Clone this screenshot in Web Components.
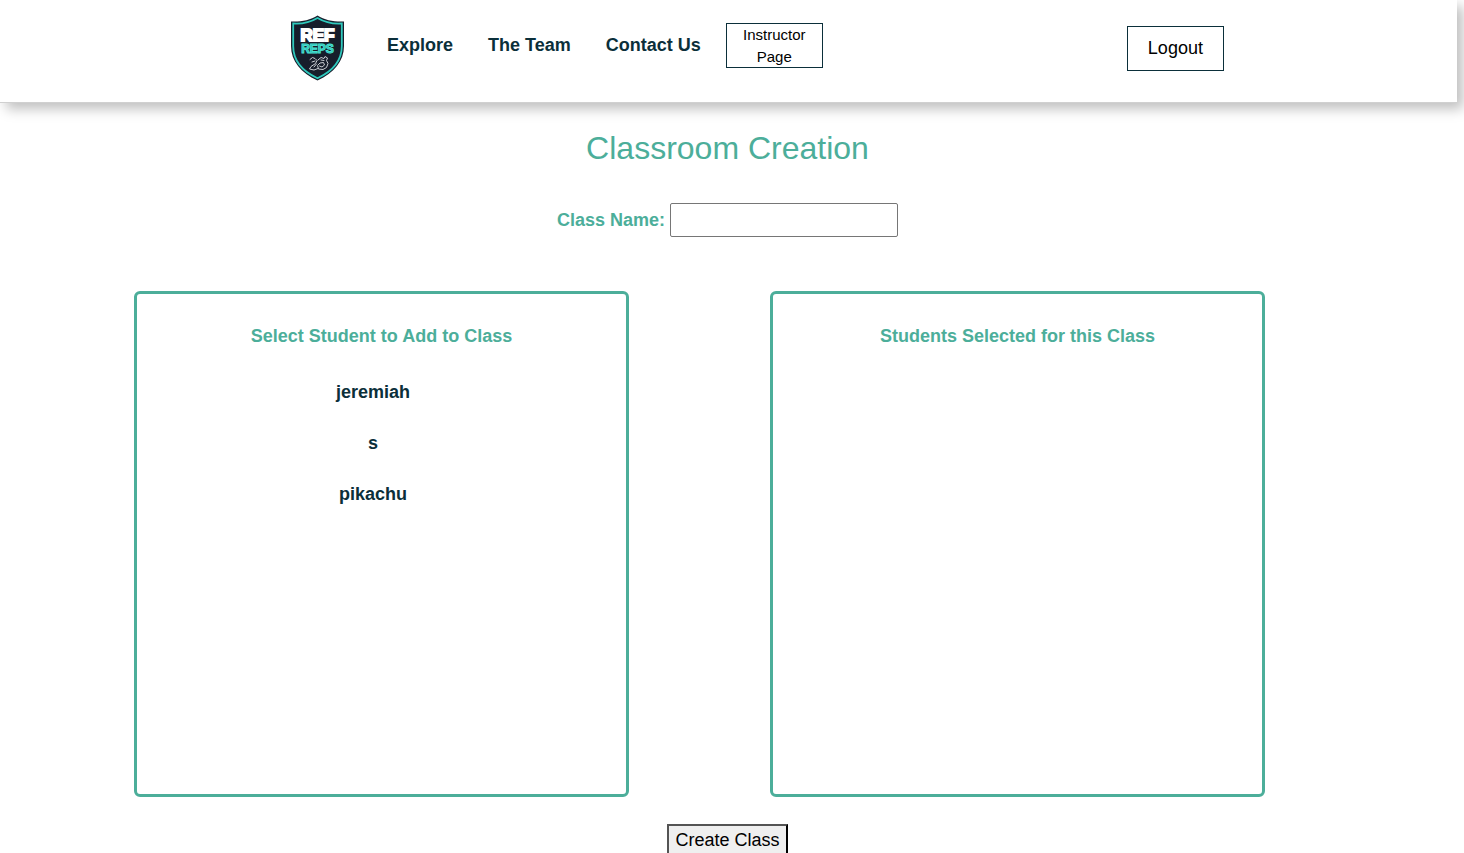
<!DOCTYPE html>
<html lang="en">
<head>
<meta charset="utf-8">
<meta name="viewport" content="width=device-width, initial-scale=1">
<title>Classroom Creation</title>
<style>
  html { --teal: #4cae9a; --ink: #0b2f3a; background: #fff; }
  body { margin: 0; padding-right: 7px; font: 18px/22px "Liberation Sans", Arial, sans-serif; color: #000; }
</style>
</head>
<body>
<site-header>
  <nav-link href="#explore">Explore</nav-link>
  <nav-link href="#team">The Team</nav-link>
  <nav-link href="#contact">Contact Us</nav-link>
  <outline-button slot="page" small>Instructor Page</outline-button>
  <outline-button slot="account">Logout</outline-button>
</site-header>
<classroom-form>
  <student-panel heading="Select Student to Add to Class">
    <student-item>jeremiah</student-item>
    <student-item>s</student-item>
    <student-item>pikachu</student-item>
  </student-panel>
  <student-panel heading="Students Selected for this Class"></student-panel>
</classroom-form>

<script>
const define = (name, html, setup) => {
  const template = document.createElement('template');
  template.innerHTML = html;
  customElements.define(name, class extends HTMLElement {
    constructor() {
      super();
      this.attachShadow({ mode: 'open' }).append(template.content.cloneNode(true));
    }
    connectedCallback() { if (setup) setup(this, this.shadowRoot); }
  });
};

define('ref-logo', `
  <style>
    :host { display: block; width: 55px; height: 66px; }
    svg { display: block; width: 100%; height: 100%; }
    text { font-family: "Liberation Sans", Arial, sans-serif; font-weight: 900; text-anchor: middle; }
  </style>
  <svg viewBox="0 0 55 66" role="img" aria-label="Ref Reps">
    <path d="M27.500 .5C20 5.500 10 7 1 6.500V31C1 46 11 58 27.500 65.500C44 58 54 46 54 31V6.500C45 7 35 5.500 27.500 .5Z" fill="#171d2b"/>
    <path d="M27.500 3C20 7.500 11 9 3.200 8.500V31C3.200 45 12 56 27.500 63.200C43 56 51.800 45 51.800 31V8.500C44 9 35 7.500 27.500 3Z" fill="none" stroke="#2fc9bd" stroke-width="1.800"/>
    <text x="27.500" y="25.500" font-size="17" fill="#fff" stroke="#fff" stroke-width="2">REF</text>
    <text x="27.500" y="38" font-size="12" fill="#25aaa4" stroke="#48e0d2" stroke-width="1">REPS</text>
    <g fill="none" stroke="#c9ccd2" stroke-width="1" stroke-linecap="round" stroke-linejoin="round">
      <path d="M20 44.500L22.500 42.500L25 43.500L27 45.500L25.500 48.500L21 51.500L19.500 54L24 55L28 53.500"/>
      <path d="M28 45L31 42.500L34 43.500L35 41.500L37.500 43L36.500 45.500L38 48.500L36.500 52.500L33 54.500L28.500 54L27.500 50.500L30 48L33.500 47.500L34.500 50L32 52L29.500 51"/>
      <path d="M22 47L25 46M31 45L34 45.500M24 52L26.500 49"/>
    </g>
  </svg>`);

define('nav-link', `
  <style>
    :host { display: block; }
    a { color: var(--ink); font-weight: 700; text-decoration: none; white-space: nowrap; }
  </style>
  <a><slot></slot></a>`,
  (el, root) => { root.querySelector('a').href = el.getAttribute('href'); });

define('outline-button', `
  <style>
    :host { display: block; }
    button { display: block; box-sizing: border-box; width: 97px; height: 45px; margin: 0; padding: 0 12px;
      border: 1px solid var(--ink); background: #fff; color: #000; font: inherit; cursor: pointer; }
    :host([small]) button { padding-bottom: 2px; font-size: 15px; }
  </style>
  <button type="button"><slot></slot></button>`);

define('site-header', `
  <style>
    :host { display: block; }
    header { display: flex; align-items: center; box-sizing: border-box; height: 103px; padding: 0 16% 12px 290px;
      border-bottom: 1px solid #d0d0d0; background: #fff; box-shadow: 6px 6px 12px #bfbfbf; }
    ref-logo { margin-top: 6px; }
    nav { display: flex; gap: 35px; margin: 0 25px 0 42px; }
    .account { margin: 6px 0 0 auto; }
  </style>
  <header>
    <ref-logo></ref-logo>
    <nav aria-label="Main"><slot></slot></nav>
    <slot name="page"></slot>
    <div class="account"><slot name="account"></slot></div>
  </header>`);

define('student-item', `
  <style>
    :host { display: block; }
    button { border: 0; padding: 0; background: none; color: var(--ink); font: inherit; font-weight: 700; cursor: pointer; }
  </style>
  <button type="button"><slot></slot></button>`);

define('student-panel', `
  <style>
    :host { display: block; }
    section { box-sizing: border-box; height: 506px; padding: 31px 0; border: 3px solid var(--teal); border-radius: 6px; text-align: center; }
    h2 { margin: 0; color: var(--teal); font: inherit; font-weight: 700; }
    .list { display: grid; gap: 29px; margin: 34px 17px 0 0; }
  </style>
  <section>
    <h2></h2>
    <div class="list"><slot></slot></div>
  </section>`,
  (el, root) => { root.querySelector('h2').textContent = el.getAttribute('heading'); });

define('classroom-form', `
  <style>
    :host { display: block; text-align: center; }
    main { padding-right: 2px; }
    h1 { margin: 27px 0 0; color: var(--teal); font-size: 32px; line-height: 36px; font-weight: 400; }
    .field { display: flex; justify-content: center; align-items: center; gap: 5px; margin-top: 37px; }
    label { color: var(--teal); font-weight: 700; }
    input { box-sizing: border-box; width: 228px; height: 34px; border: 1px solid #767676; border-radius: 2px; padding: 1px 4px; font: inherit; }
    .panels { display: grid; grid-template-columns: 1fr 1fr; gap: 141px; margin: 54px 190px 27px 134px; }
    .create { box-sizing: border-box; width: 121px; height: 32px; padding: 0; border: 2px outset #000; background: #efefef; color: #000; font: inherit; }
  </style>
  <main>
    <h1>Classroom Creation</h1>
    <div class="field"><label for="name">Class Name:</label><input id="name" type="text"></div>
    <div class="panels"><slot></slot></div>
    <button class="create" type="button">Create Class</button>
  </main>`);
</script>
</body>
</html>
